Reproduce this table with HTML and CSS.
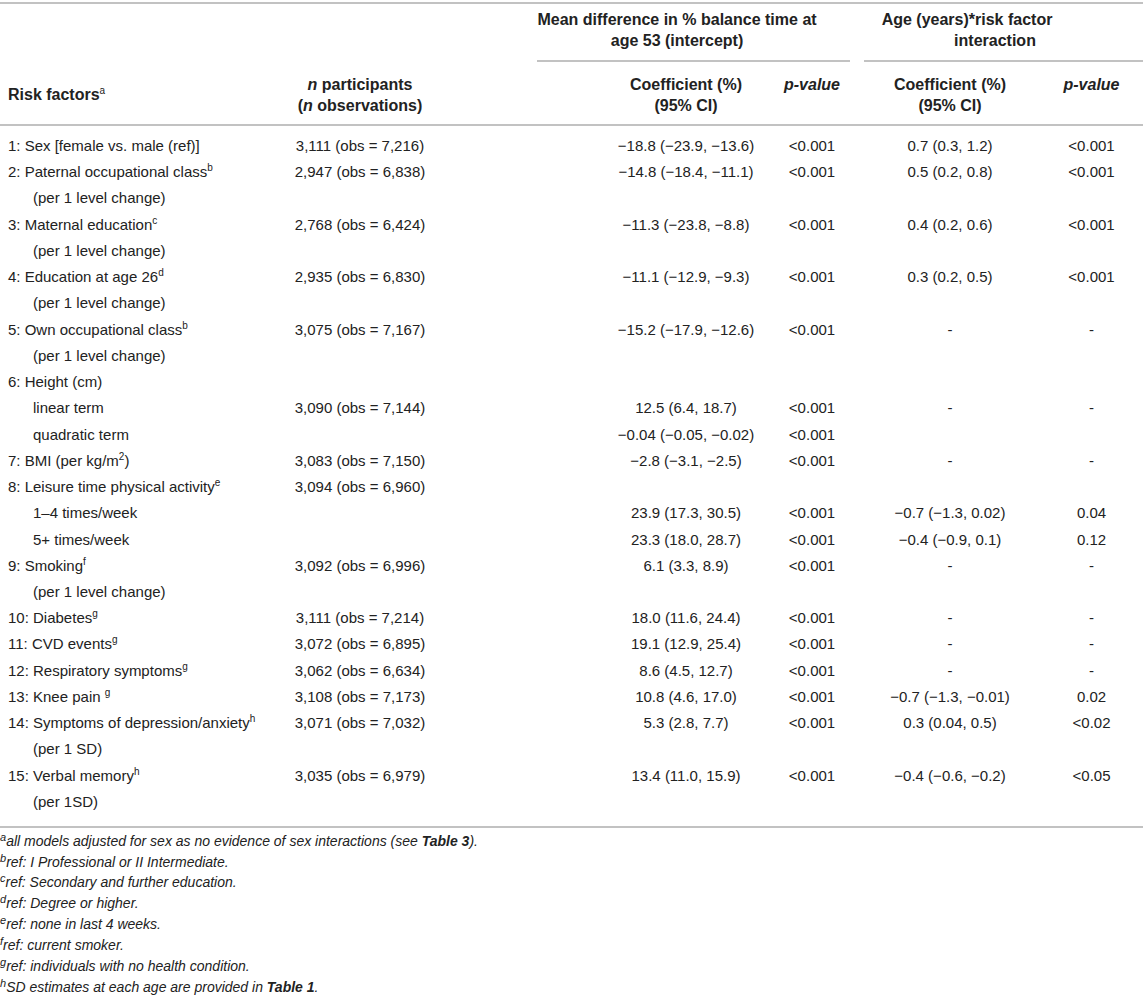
FILE: index.html
```html
<!DOCTYPE html>
<html lang="en">
<head>
    <meta charset="UTF-8">
    <meta name="viewport" content="width=device-width, initial-scale=1.0">
    <title>Balance time and risk factors</title>
    <link rel="stylesheet" href="styles.css">
</head>
<body>
    <table class="results">
        <colgroup>
            <col class="col-factor">
            <col class="col-n">
            <col class="col-coef">
            <col class="col-p">
            <col class="col-coef2">
            <col class="col-p2">
        </colgroup>
        <thead>
            <tr class="group-row">
                <th colspan="2"></th>
                <th colspan="2" class="group group-mean">
                    <div class="group-title">Mean difference in % balance time at<br>age 53 (intercept)</div>
                    <div class="group-rule"></div>
                </th>
                <th colspan="2" class="group group-age">
                    <div class="group-title"><span class="first-line">Age (years)*risk factor</span><br>interaction</div>
                    <div class="group-rule"></div>
                </th>
            </tr>
            <tr class="head-row">
                <th class="factor-head">Risk factors<sup>a</sup></th>
                <th><i>n</i> participants<br>(<i>n</i> observations)</th>
                <th class="coef">Coefficient (%)<br>(95% CI)</th>
                <th><i>p-value</i></th>
                <th>Coefficient (%)<br>(95% CI)</th>
                <th class="p2"><i>p-value</i></th>
            </tr>
        </thead>
        <tbody>
            <tr>
                <td>1: Sex [female vs. male (ref)]</td>
                <td class="num">3,111 (obs = 7,216)</td>
                <td class="num coef">−18.8 (−23.9, −13.6)</td>
                <td class="num">&lt;0.001</td>
                <td class="num">0.7 (0.3, 1.2)</td>
                <td class="num p2">&lt;0.001</td>
            </tr>
            <tr>
                <td>2: Paternal occupational class<sup>b</sup></td>
                <td class="num">2,947 (obs = 6,838)</td>
                <td class="num coef">−14.8 (−18.4, −11.1)</td>
                <td class="num">&lt;0.001</td>
                <td class="num">0.5 (0.2, 0.8)</td>
                <td class="num p2">&lt;0.001</td>
            </tr>
            <tr>
                <td class="sub">(per 1 level change)</td>
                <td></td><td></td><td></td><td></td><td></td>
            </tr>
            <tr>
                <td>3: Maternal education<sup>c</sup></td>
                <td class="num">2,768 (obs = 6,424)</td>
                <td class="num coef">−11.3 (−23.8, −8.8)</td>
                <td class="num">&lt;0.001</td>
                <td class="num">0.4 (0.2, 0.6)</td>
                <td class="num p2">&lt;0.001</td>
            </tr>
            <tr>
                <td class="sub">(per 1 level change)</td>
                <td></td><td></td><td></td><td></td><td></td>
            </tr>
            <tr>
                <td>4: Education at age 26<sup>d</sup></td>
                <td class="num">2,935 (obs = 6,830)</td>
                <td class="num coef">−11.1 (−12.9, −9.3)</td>
                <td class="num">&lt;0.001</td>
                <td class="num">0.3 (0.2, 0.5)</td>
                <td class="num p2">&lt;0.001</td>
            </tr>
            <tr>
                <td class="sub">(per 1 level change)</td>
                <td></td><td></td><td></td><td></td><td></td>
            </tr>
            <tr>
                <td>5: Own occupational class<sup>b</sup></td>
                <td class="num">3,075 (obs = 7,167)</td>
                <td class="num coef">−15.2 (−17.9, −12.6)</td>
                <td class="num">&lt;0.001</td>
                <td class="num">-</td>
                <td class="num p2">-</td>
            </tr>
            <tr>
                <td class="sub">(per 1 level change)</td>
                <td></td><td></td><td></td><td></td><td></td>
            </tr>
            <tr>
                <td>6: Height (cm)</td>
                <td></td><td></td><td></td><td></td><td></td>
            </tr>
            <tr>
                <td class="sub">linear term</td>
                <td class="num">3,090 (obs = 7,144)</td>
                <td class="num coef">12.5 (6.4, 18.7)</td>
                <td class="num">&lt;0.001</td>
                <td class="num">-</td>
                <td class="num p2">-</td>
            </tr>
            <tr>
                <td class="sub">quadratic term</td>
                <td></td>
                <td class="num coef">−0.04 (−0.05, −0.02)</td>
                <td class="num">&lt;0.001</td>
                <td></td>
                <td></td>
            </tr>
            <tr>
                <td>7: BMI (per kg/m<sup>2</sup>)</td>
                <td class="num">3,083 (obs = 7,150)</td>
                <td class="num coef">−2.8 (−3.1, −2.5)</td>
                <td class="num">&lt;0.001</td>
                <td class="num">-</td>
                <td class="num p2">-</td>
            </tr>
            <tr>
                <td>8: Leisure time physical activity<sup>e</sup></td>
                <td class="num">3,094 (obs = 6,960)</td>
                <td></td><td></td><td></td><td></td>
            </tr>
            <tr>
                <td class="sub">1–4 times/week</td>
                <td></td>
                <td class="num coef">23.9 (17.3, 30.5)</td>
                <td class="num">&lt;0.001</td>
                <td class="num">−0.7 (−1.3, 0.02)</td>
                <td class="num p2">0.04</td>
            </tr>
            <tr>
                <td class="sub">5+ times/week</td>
                <td></td>
                <td class="num coef">23.3 (18.0, 28.7)</td>
                <td class="num">&lt;0.001</td>
                <td class="num">−0.4 (−0.9, 0.1)</td>
                <td class="num p2">0.12</td>
            </tr>
            <tr>
                <td>9: Smoking<sup>f</sup></td>
                <td class="num">3,092 (obs = 6,996)</td>
                <td class="num coef">6.1 (3.3, 8.9)</td>
                <td class="num">&lt;0.001</td>
                <td class="num">-</td>
                <td class="num p2">-</td>
            </tr>
            <tr>
                <td class="sub">(per 1 level change)</td>
                <td></td><td></td><td></td><td></td><td></td>
            </tr>
            <tr>
                <td>10: Diabetes<sup>g</sup></td>
                <td class="num">3,111 (obs = 7,214)</td>
                <td class="num coef">18.0 (11.6, 24.4)</td>
                <td class="num">&lt;0.001</td>
                <td class="num">-</td>
                <td class="num p2">-</td>
            </tr>
            <tr>
                <td>11: CVD events<sup>g</sup></td>
                <td class="num">3,072 (obs = 6,895)</td>
                <td class="num coef">19.1 (12.9, 25.4)</td>
                <td class="num">&lt;0.001</td>
                <td class="num">-</td>
                <td class="num p2">-</td>
            </tr>
            <tr>
                <td>12: Respiratory symptoms<sup>g</sup></td>
                <td class="num">3,062 (obs = 6,634)</td>
                <td class="num coef">8.6 (4.5, 12.7)</td>
                <td class="num">&lt;0.001</td>
                <td class="num">-</td>
                <td class="num p2">-</td>
            </tr>
            <tr>
                <td>13: Knee pain <sup>g</sup></td>
                <td class="num">3,108 (obs = 7,173)</td>
                <td class="num coef">10.8 (4.6, 17.0)</td>
                <td class="num">&lt;0.001</td>
                <td class="num">−0.7 (−1.3, −0.01)</td>
                <td class="num p2">0.02</td>
            </tr>
            <tr>
                <td>14: Symptoms of depression/anxiety<sup>h</sup></td>
                <td class="num">3,071 (obs = 7,032)</td>
                <td class="num coef">5.3 (2.8, 7.7)</td>
                <td class="num">&lt;0.001</td>
                <td class="num">0.3 (0.04, 0.5)</td>
                <td class="num p2">&lt;0.02</td>
            </tr>
            <tr>
                <td class="sub">(per 1 SD)</td>
                <td></td><td></td><td></td><td></td><td></td>
            </tr>
            <tr>
                <td>15: Verbal memory<sup>h</sup></td>
                <td class="num">3,035 (obs = 6,979)</td>
                <td class="num coef">13.4 (11.0, 15.9)</td>
                <td class="num">&lt;0.001</td>
                <td class="num">−0.4 (−0.6, −0.2)</td>
                <td class="num p2">&lt;0.05</td>
            </tr>
            <tr>
                <td class="sub">(per 1SD)</td>
                <td></td><td></td><td></td><td></td><td></td>
            </tr>
        </tbody>
    </table>
    <div class="notes">
        <p><sup>a</sup>all models adjusted for sex as no evidence of sex interactions (see <b>Table 3</b>).</p>
        <p><sup>b</sup>ref: I Professional or II Intermediate.</p>
        <p><sup>c</sup>ref: Secondary and further education.</p>
        <p><sup>d</sup>ref: Degree or higher.</p>
        <p><sup>e</sup>ref: none in last 4 weeks.</p>
        <p><sup>f</sup>ref: current smoker.</p>
        <p><sup>g</sup>ref: individuals with no health condition.</p>
        <p><sup>h</sup>SD estimates at each age are provided in <b>Table 1</b>.</p>
    </div>
</body>
</html>
```

FILE: styles.css
```css
body {
    font-family: "Liberation Sans", Arial, sans-serif;
    color: #222;
    background-color: #fff;
    margin: 0;
    padding: 2px 0 0 0;
}
.results {
    width: 1143px;
    table-layout: fixed;
    border-collapse: collapse;
    border-top: 2px solid #c2c2c2;
    font-size: 15px;
}
.col-factor { width: 240px; }
.col-n { width: 240px; }
.col-coef { width: 280px; }
.col-p { width: 104px; }
.col-coef2 { width: 172px; }
.col-p2 { width: 107px; }

th {
    font-size: 16px;
    font-weight: bold;
    line-height: 21px;
    text-align: center;
    vertical-align: top;
    padding: 0;
    white-space: nowrap;
}
.group-row th {
    padding-top: 4.5px;
}
.group-title {
    padding-bottom: 9.5px;
}
.group-rule {
    height: 2px;
    background: #c2c2c2;
}
.group-mean .group-title { padding: 0 20px 9.5px 30px; }
.group-mean .group-rule { margin: 0 14px 0 57px; }
.group-age .group-title { padding: 0 17px 9.5px 0; }
.group-age .first-line { padding-right: 56px; }

.head-row th {
    padding-top: 11.5px;
    padding-bottom: 8.5px;
    border-bottom: 2px solid #c2c2c2;
}
.head-row .factor-head {
    text-align: left;
    vertical-align: middle;
    padding-left: 8px;
}
.head-row th.coef,
td.coef {
    padding-left: 132px;
}
.head-row th.p2,
td.p2 {
    padding-left: 4px;
}
sup {
    font-size: 10px;
    line-height: 0;
    vertical-align: 6px;
}
th sup {
    font-weight: normal;
}

td {
    padding: 0;
    line-height: 26.24px;
    white-space: nowrap;
}
td:first-child {
    padding-left: 8px;
}
td.sub {
    padding-left: 33px;
}
td.num {
    text-align: center;
}
tbody tr:first-child td {
    padding-top: 7px;
}
tbody tr:last-child td {
    padding-bottom: 11px;
    border-bottom: 2px solid #c2c2c2;
}

.notes {
    margin-top: 2.6px;
    font-size: 14px;
    font-style: italic;
}
.notes p {
    margin: 0;
    line-height: 20.86px;
}
.notes sup {
    font-size: 11px;
    vertical-align: 5px;
}
```
